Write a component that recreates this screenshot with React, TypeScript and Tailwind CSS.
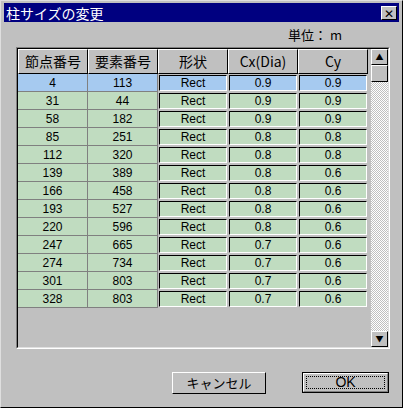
import React from "react";

const rows = [
  ["4","113","0.9","0.9"],["31","44","0.9","0.9"],["58","182","0.9","0.9"],["85","251","0.8","0.8"],
  ["112","320","0.8","0.8"],["139","389","0.8","0.6"],["166","458","0.8","0.6"],["193","527","0.8","0.6"],
  ["220","596","0.8","0.6"],["247","665","0.7","0.6"],["274","734","0.7","0.6"],["301","803","0.7","0.6"],["328","803","0.7","0.6"],
];
const hdr = ["節点番号","要素番号","形状","Cx(Dia)","Cy"];

export default function App() {
  return (
    <div className="w-[403px] h-[408px] bg-[#c0c0c0] border border-t-[#dfdfdf] border-l-[#dfdfdf] border-r-black border-b-black flex flex-col text-black" style={{fontFamily:'"Noto Sans CJK JP","DejaVu Sans",sans-serif'}}>
      <div className="mx-[3px] mt-[2px] h-[19px] bg-[#000080] flex items-center justify-between pl-[2px] pr-[2px]">
        <span className="text-white text-[14px] leading-none">柱サイズの変更</span>
        <div className="w-[16px] h-[14px] bg-[#c0c0c0] border border-t-white border-l-white border-r-black border-b-black flex items-center justify-center text-[12px] font-bold leading-none">✕</div>
      </div>
      <div className="h-[22px] flex items-end justify-end pr-[60px] text-[13px]">単位： m</div>
      <div className="ml-[15px] mt-[3px] w-[374px] h-[302px] border border-t-[#808080] border-l-[#808080] border-r-white border-b-white flex">
        <div className="flex-1 border border-t-black border-l-black border-r-[#dfdfdf] border-b-[#dfdfdf] bg-[#c0c0c0] flex">
          <div className="w-[351px] flex flex-col">
            <div className="flex h-[25px]">
              {hdr.map((h,i)=>(
                <div key={i} className="w-[70px] h-[25px] border border-t-white border-l-white border-r-black border-b-black flex items-center justify-center text-[14px]">{h}</div>
              ))}
            </div>
            {rows.map((r,ri)=>{
              const bg = ri===0 ? "bg-[#a6caf0]" : "bg-[#c0dcc0]";
              return (
                <div key={ri} className="flex h-[18px]" style={{fontFamily:'"Liberation Sans",sans-serif'}}>
                  {[r[0],r[1]].map((v,i)=>(
                    <div key={i} className={`w-[70px] ${bg} border-r border-b border-[#808080] flex items-center justify-center text-[12px]`}>{v}</div>
                  ))}
                  {["Rect",r[2],r[3]].map((v,i)=>(
                    <div key={i} className={`w-[70px] bg-[#c0c0c0] p-[1px]`}>
                      <div className={`h-full ${bg} border border-t-black border-l-black border-r-white border-b-white flex items-center justify-center text-[12px]`}>{v}</div>
                    </div>
                  ))}
                </div>
              );
            })}
          </div>
          <div className="ml-auto w-[17px] flex flex-col bg-[repeating-conic-gradient(#fff_0_25%,#c0c0c0_0_50%)] bg-[length:2px_2px]">
            <div className="h-[16px] bg-[#c0c0c0] border border-t-white border-l-white border-r-black border-b-black flex items-center justify-center text-[8px] leading-none">▲</div>
            <div className="h-[17px] bg-[#c0c0c0] border border-t-white border-l-white border-r-black border-b-black"></div>
            <div className="flex-1"></div>
            <div className="h-[16px] bg-[#c0c0c0] border border-t-white border-l-white border-r-black border-b-black flex items-center justify-center text-[8px] leading-none">▼</div>
          </div>
        </div>
      </div>
      <div className="flex mt-[23px]">
        <div className="ml-[171px] w-[94px] h-[22px] bg-[#c0c0c0] border border-t-white border-l-white border-r-black border-b-black flex items-center justify-center text-[13px]">キャンセル</div>
        <div className="ml-[36px] w-[87px] h-[21px] border border-black">
          <div className="h-full border border-t-white border-l-white border-r-[#808080] border-b-[#808080] p-[2px]">
            <div className="h-full border border-dotted border-black flex items-center justify-center text-[14px]" style={{fontFamily:'"Liberation Sans",sans-serif'}}>OK</div>
          </div>
        </div>
      </div>
    </div>
  );
}
